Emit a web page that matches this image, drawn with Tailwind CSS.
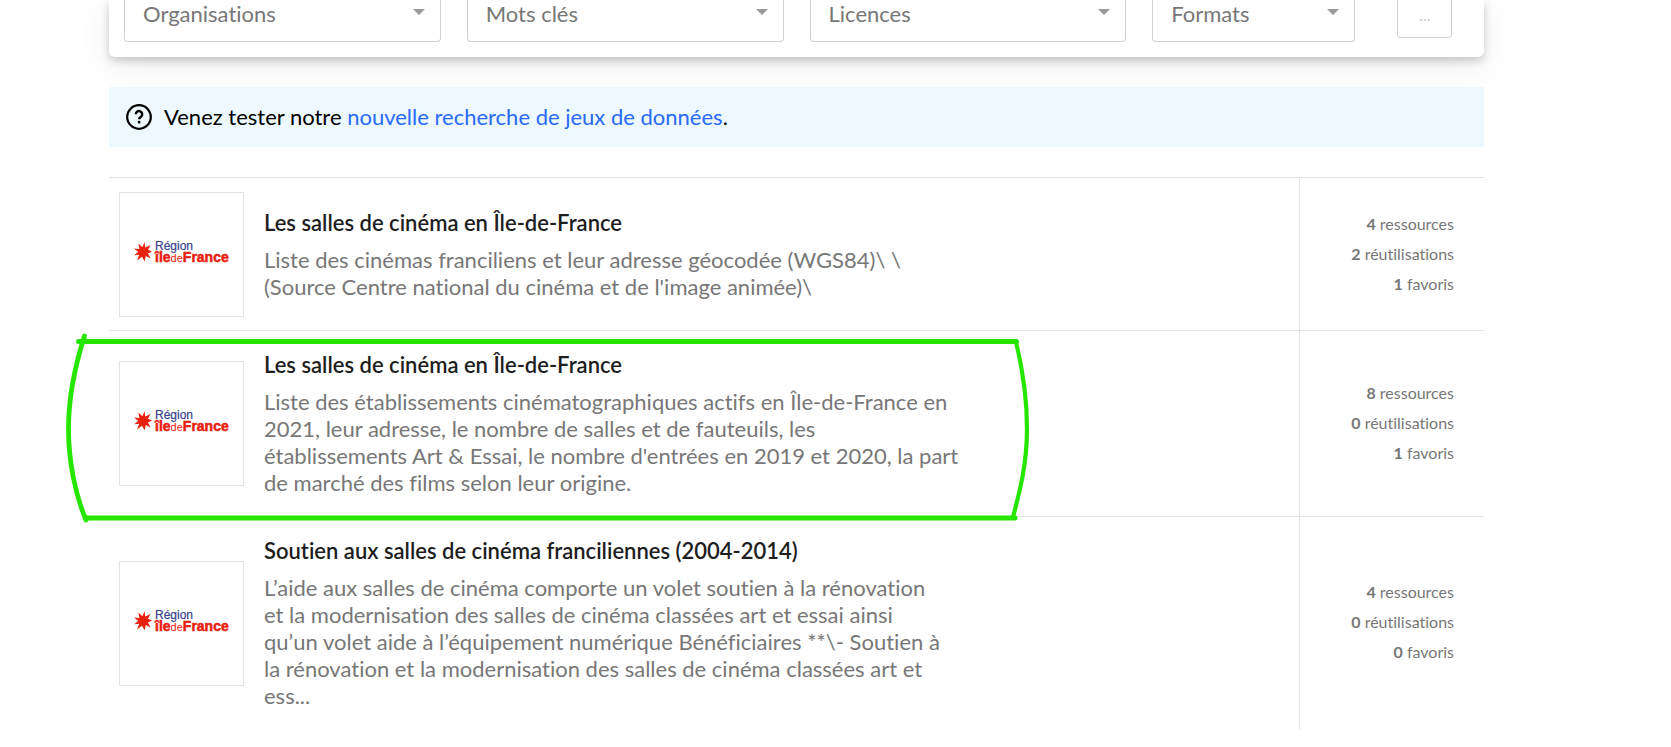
<!DOCTYPE html>
<html lang="fr">
<head>
<meta charset="utf-8">
<meta name="viewport" content="width=device-width, initial-scale=1">
<title>Jeux de données</title>
<script src="https://cdn.jsdelivr.net/npm/@tailwindcss/browser@4"></script>
</head>
<body class="bg-white font-['Lato',sans-serif] text-[22px] leading-[27px] text-[#1e1e1e] [font-variant-ligatures:none]">

<svg class="hidden" aria-hidden="true">
  <symbol id="logo-idf" viewBox="0 0 123 123">
    <polygon fill="#e8200f" points="24.6,49 25.2,54.6 30.6,52 28,56.8 32,58.6 28,60.4 30.6,65.5 25.8,63 24.6,68.6 22,63.8 17,67.6 19.2,61.8 14.2,62.2 18.2,58.8 14,55.4 19.4,56 18.4,50.6 22.4,54.2"/>
    <text x="35" y="57" font-family="Liberation Sans, sans-serif" font-size="12" fill="#3a3f8f" stroke="#3a3f8f" stroke-width=".2">Région</text>
    <text x="35" y="69" font-family="Liberation Sans, sans-serif" font-size="14" font-weight="700" fill="#e8200f" stroke="#e8200f" stroke-width=".5">île<tspan font-size="11" font-weight="400" stroke="none">de</tspan>France</text>
  </symbol>
  <symbol id="caret" viewBox="0 0 12 6"><path d="M0 0h12L6 6z" fill="#999"/></symbol>
</svg>

<div class="relative ml-[109px] mr-[187px]">
  <form class="grid h-[57px] grid-cols-[3fr_3fr_3fr_2fr_1fr] items-start rounded-b-md px-0.5 shadow-[0_4px_8px_rgba(0,0,0,0.18),0_8px_32px_rgba(0,0,0,0.08)]">
    <div class="relative px-[13px]">
      <select aria-label="Organisations" class="h-[42px] w-full appearance-none rounded-b border border-t-0 border-[#d2d2d2] bg-white px-[18px] pb-[14px] text-[#777]"><option>Organisations</option></select>
      <svg class="pointer-events-none absolute top-[9px] right-[29px] h-1.5 w-3"><use href="#caret"/></svg>
    </div>
    <div class="relative px-[13px]">
      <select aria-label="Mots clés" class="h-[42px] w-full appearance-none rounded-b border border-t-0 border-[#d2d2d2] bg-white px-[18px] pb-[14px] text-[#777]"><option>Mots clés</option></select>
      <svg class="pointer-events-none absolute top-[9px] right-[29px] h-1.5 w-3"><use href="#caret"/></svg>
    </div>
    <div class="relative px-[13px]">
      <select aria-label="Licences" class="h-[42px] w-full appearance-none rounded-b border border-t-0 border-[#d2d2d2] bg-white px-[18px] pb-[14px] text-[#777]"><option>Licences</option></select>
      <svg class="pointer-events-none absolute top-[9px] right-[29px] h-1.5 w-3"><use href="#caret"/></svg>
    </div>
    <div class="relative px-[13px]">
      <select aria-label="Formats" class="h-[42px] w-full appearance-none rounded-b border border-t-0 border-[#d2d2d2] bg-white px-[18px] pb-[14px] text-[#777]"><option>Formats</option></select>
      <svg class="pointer-events-none absolute top-[9px] right-[29px] h-1.5 w-3"><use href="#caret"/></svg>
    </div>
    <button type="button" class="h-[38px] w-[55px] justify-self-center rounded-b border border-t-0 border-[#d2d2d2] pb-[7px] text-base text-[#c4c4c4]">...</button>
  </form>

  <p class="mt-[30px] flex h-[60px] items-center gap-3 bg-[#edf8ff] px-[17px] text-black">
    <svg class="size-[26px] shrink-0" viewBox="0 0 26 26" fill="none" stroke="#000" aria-hidden="true">
      <circle cx="13" cy="13" r="11.8" stroke-width="2.2"/>
      <path d="M9.8 10.2a3.2 3.2 0 1 1 5.2 2.5c-1.2.9-1.9 1.2-1.9 2.6" stroke-width="2.4"/>
      <path d="M13.1 16.9v2.5" stroke-width="2.5"/>
    </svg>
    <span class="pb-0.5">Venez tester notre <a href="#" class="text-[#2a6af8]">nouvelle recherche de jeux de données</a>.</span>
  </p>

  <ul class="mt-[30px]">
    <li class="flex min-h-[153px] items-stretch border-t border-[#e2e2e2]">
      <a href="#" class="flex flex-1 items-center gap-5 pl-2.5">
        <svg class="size-[125px] shrink-0 border border-[#e2e2e2]" role="img" aria-label="Région Île-de-France"><use href="#logo-idf"/></svg>
        <span class="block">
          <strong class="block font-semibold">Les salles de cinéma en Île-de-France</strong>
          <span class="mt-2.5 block text-[#777]">Liste des cinémas franciliens et leur adresse géocodée (WGS84)\ \<br>(Source Centre national du cinéma et de l'image animée)\</span>
        </span>
      </a>
      <div class="mt-px flex w-[185px] flex-col justify-center border-l border-[#e2e2e2] pr-[30px] pb-0.5 text-right text-base leading-[30px] text-[#777]">
        <p><b>4</b> ressources</p><p><b>2</b> réutilisations</p><p><b>1</b> favoris</p>
      </div>
    </li>
    <li class="flex items-stretch border-t border-[#e2e2e2]">
      <a href="#" class="flex flex-1 items-center gap-5 pl-2.5">
        <svg class="size-[125px] shrink-0 border border-[#e2e2e2]" role="img" aria-label="Région Île-de-France"><use href="#logo-idf"/></svg>
        <span class="block py-5">
          <strong class="block font-semibold">Les salles de cinéma en Île-de-France</strong>
          <span class="mt-2.5 block text-[#777]">Liste des établissements cinématographiques actifs en Île-de-France en<br>2021, leur adresse, le nombre de salles et de fauteuils, les<br>établissements Art &amp; Essai, le nombre d'entrées en 2019 et 2020, la part<br>de marché des films selon leur origine.</span>
        </span>
      </a>
      <div class="flex w-[185px] flex-col justify-center border-l border-[#e2e2e2] pr-[30px] pb-0.5 text-right text-base leading-[30px] text-[#777]">
        <p><b>8</b> ressources</p><p><b>0</b> réutilisations</p><p><b>1</b> favoris</p>
      </div>
    </li>
    <li class="flex items-stretch border-t border-[#e2e2e2]">
      <a href="#" class="flex flex-1 items-center gap-5 pl-2.5">
        <svg class="size-[125px] shrink-0 border border-[#e2e2e2]" role="img" aria-label="Région Île-de-France"><use href="#logo-idf"/></svg>
        <span class="block py-5">
          <strong class="block font-semibold">Soutien aux salles de cinéma franciliennes (2004-2014)</strong>
          <span class="mt-2.5 block text-[#777]">L’aide aux salles de cinéma comporte un volet soutien à la rénovation<br>et la modernisation des salles de cinéma classées art et essai ainsi<br>qu’un volet aide à l’équipement numérique Bénéficiaires **\- Soutien à<br>la rénovation et la modernisation des salles de cinéma classées art et<br>ess...</span>
        </span>
      </a>
      <div class="flex w-[185px] flex-col justify-center border-l border-[#e2e2e2] pr-[30px] pb-0.5 text-right text-base leading-[30px] text-[#777]">
        <p><b>4</b> ressources</p><p><b>0</b> réutilisations</p><p><b>0</b> favoris</p>
      </div>
    </li>
  </ul>

  <!-- Hand-drawn highlight around the second result -->
  <svg class="pointer-events-none absolute top-[330px] -left-[49px] h-[200px] w-[980px]" viewBox="60 330 980 200" fill="none" stroke="#26e600" stroke-linecap="round" stroke-linejoin="round" aria-hidden="true">
    <path stroke-width="5" d="M78.5 341.5H1016.5M85.5 518H1015"/>
    <path stroke-width="4.8" d="M84.5 336C73 372 68.5 400 68.5 429C68.5 460 75 494 86 520"/>
    <path stroke-width="4.2" d="M1016 342C1024 375 1027 402 1027 429C1027 463 1020 491 1013 517"/>
  </svg>
</div>
</body>
</html>
